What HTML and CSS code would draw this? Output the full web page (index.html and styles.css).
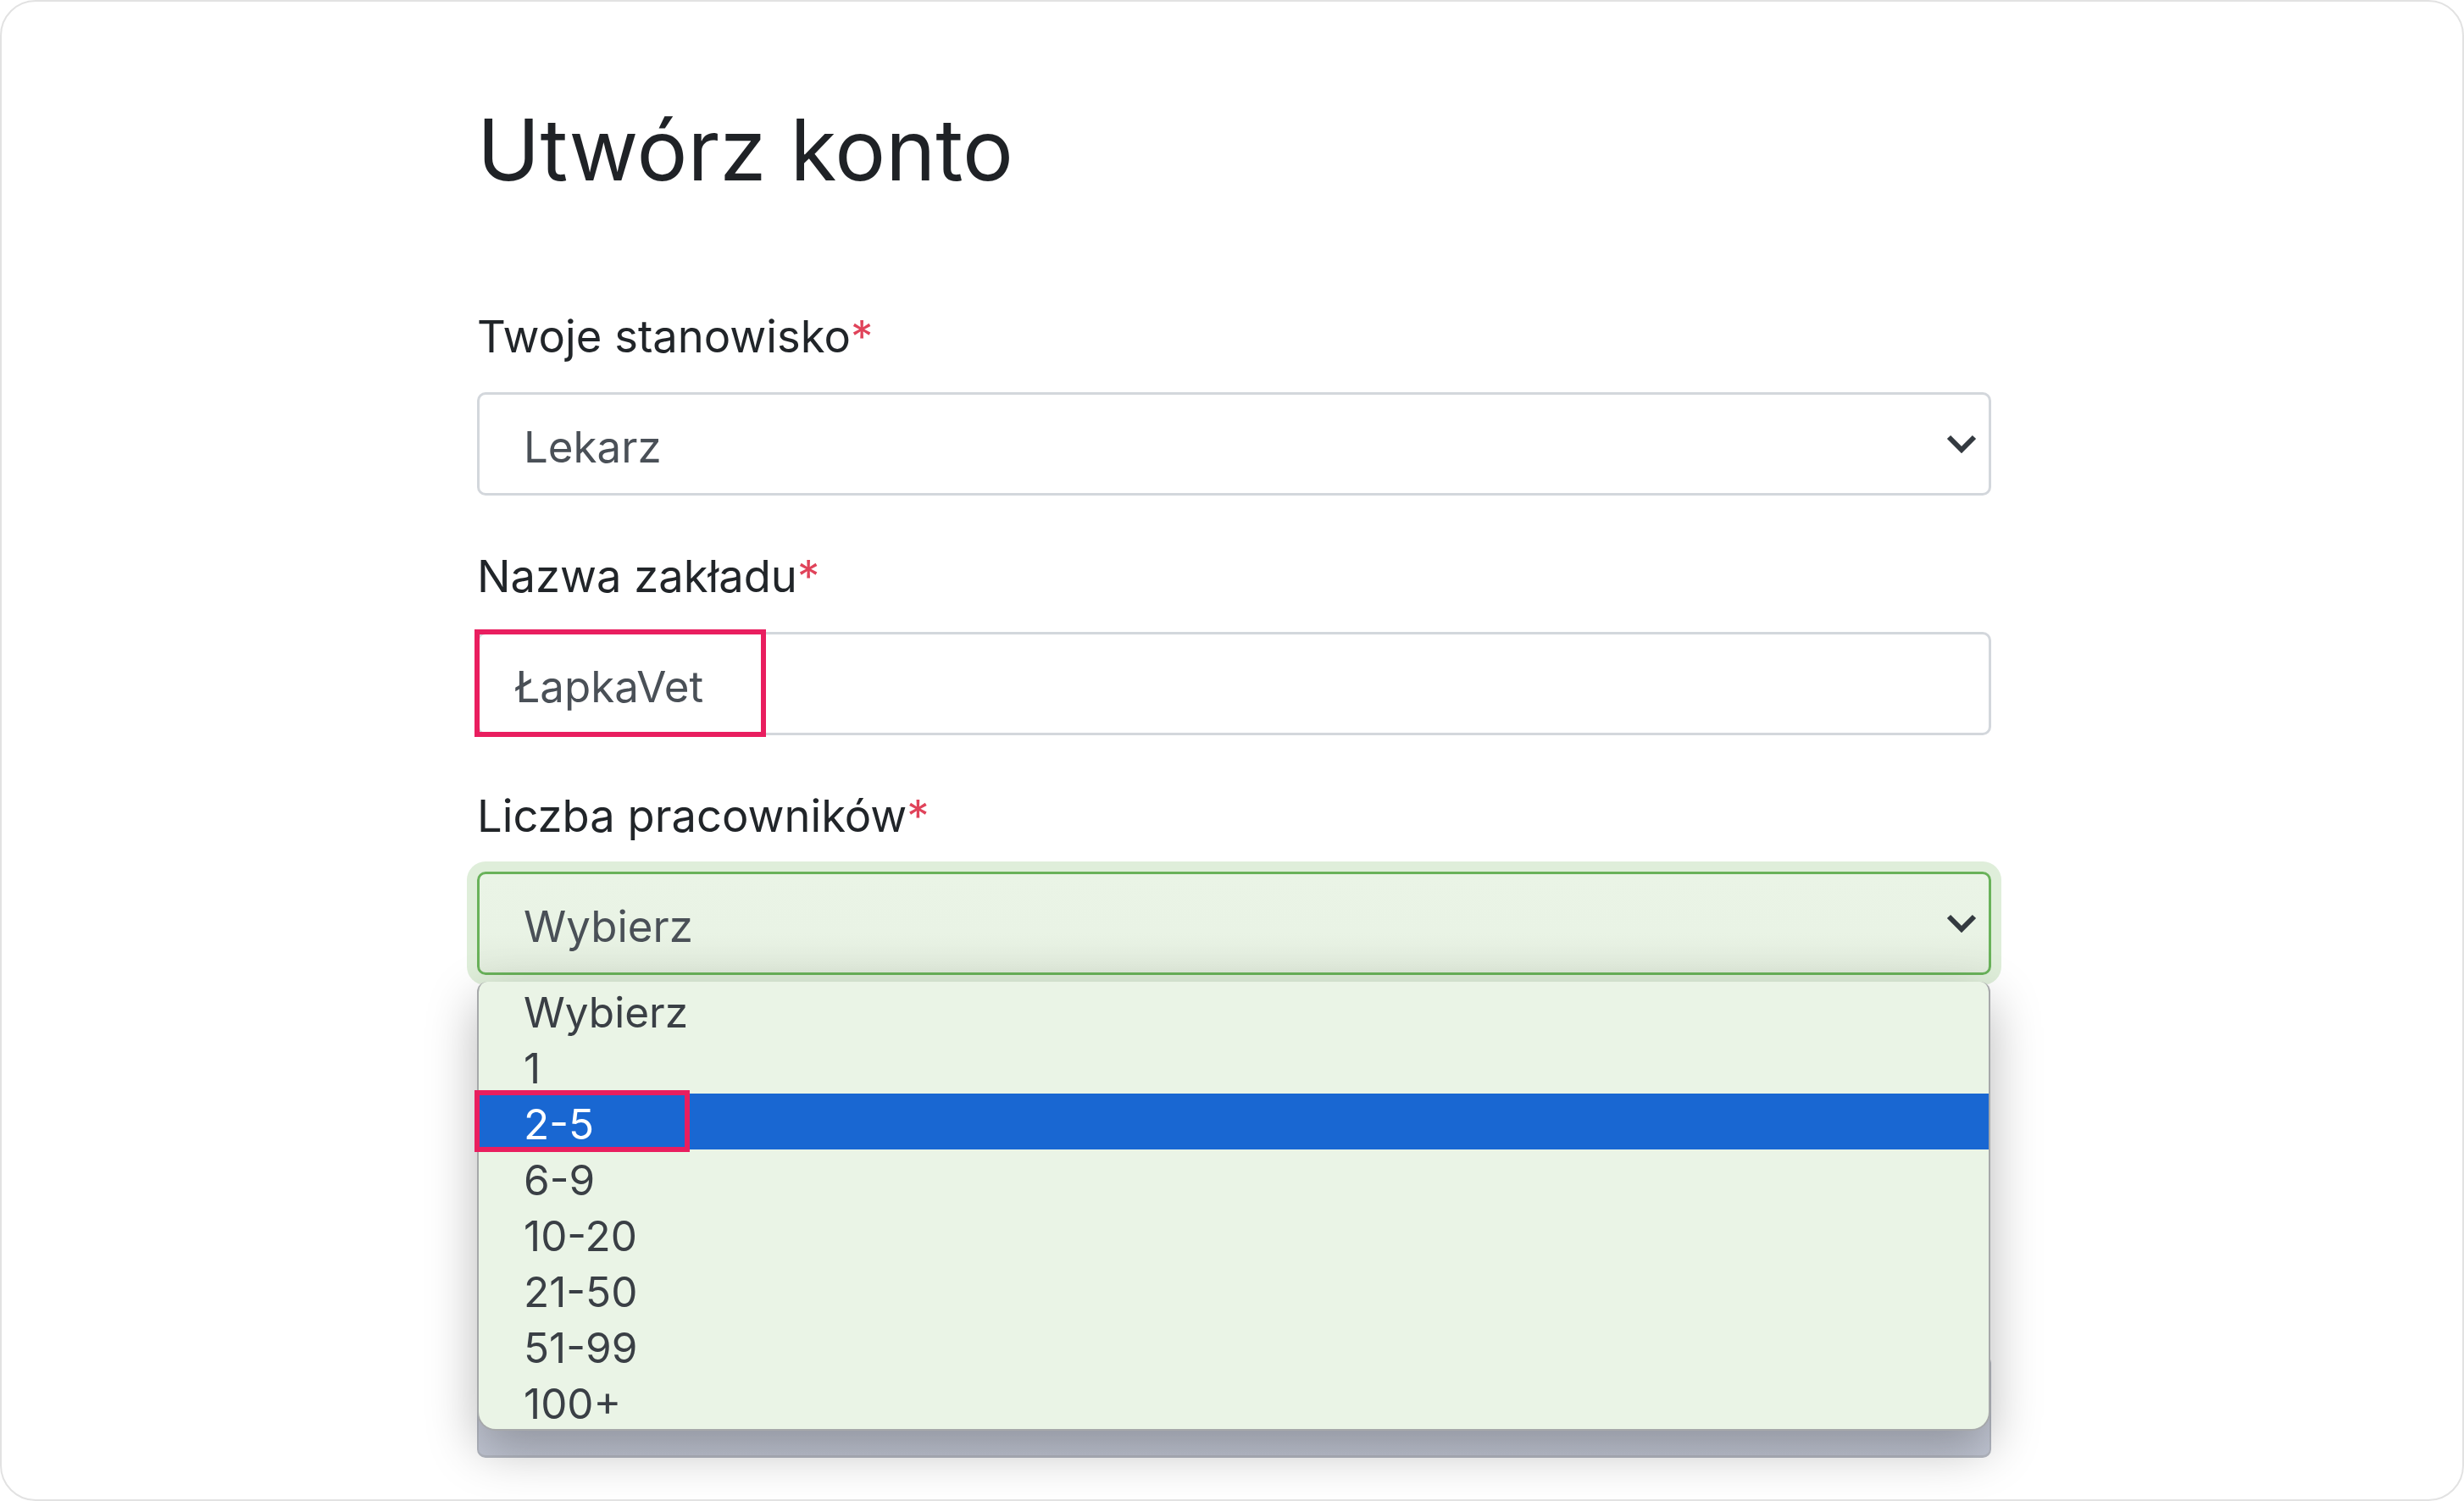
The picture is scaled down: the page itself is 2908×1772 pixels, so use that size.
FILE: index.html
```html
<!DOCTYPE html>
<html lang="pl">
<head>
<meta charset="utf-8">
<title>Utwórz konto</title>
<link rel="stylesheet" href="styles.css">
</head>
<body>
<div class="frame">
  <div class="form">
    <h1 class="title">Utwórz konto</h1>

    <div class="group">
      <div class="label">Twoje stanowisko<span class="req">*</span></div>
      <div class="field select">
        <span class="value">Lekarz</span>
        <svg class="chev" viewBox="0 0 36 22" width="36" height="22"><polyline points="3,3 18,18 33,3" fill="none" stroke="#343a40" stroke-width="6" stroke-linejoin="miter"/></svg>
      </div>
    </div>

    <div class="group">
      <div class="label">Nazwa zakładu<span class="req">*</span></div>
      <div class="field input">
        <span class="value">ŁapkaVet</span>
        <div class="mark mark-input"></div>
      </div>
    </div>

    <div class="group">
      <div class="label">Liczba pracowników<span class="req">*</span></div>
      <div class="select-wrap">
        <div class="field select focused">
          <span class="value">Wybierz</span>
          <svg class="chev" viewBox="0 0 36 22" width="36" height="22"><polyline points="3,3 18,18 33,3" fill="none" stroke="#343a40" stroke-width="6" stroke-linejoin="miter"/></svg>
        </div>
        <ul class="options">
          <li class="opt">Wybierz</li>
          <li class="opt">1</li>
          <li class="opt active">2-5<div class="mark mark-opt"></div></li>
          <li class="opt">6-9</li>
          <li class="opt">10-20</li>
          <li class="opt">21-50</li>
          <li class="opt">51-99</li>
          <li class="opt">100+</li>
        </ul>
      </div>
    </div>

    <div class="button">Zgadzam się z regulaminem i polityką prywatności</div>
  </div>
</div>
</body>
</html>
```
FILE: styles.css
```css
html, body {
  margin: 0;
  padding: 0;
  background: #ffffff;
}

.frame {
  width: 2908px;
  height: 1772px;
  box-sizing: border-box;
  border: 2px solid #e2e2e2;
  border-radius: 42px;
  background: #ffffff;
  overflow: hidden;
  padding-top: 115px;
  font-family: Inter, "Noto Sans", "Liberation Sans", sans-serif;
  color: #212529;
}

.form {
  width: 1787px;
  margin-left: 561px;
  position: relative;
}

.title {
  margin: 0 0 128px 0;
  font-size: 100px;
  font-weight: 400;
  line-height: 1.2;
  color: #1f2226;
}

.group {
  margin-bottom: 63px;
}

.label {
  font-size: 52.5px;
  line-height: 64px;
  margin-bottom: 34px;
  color: #212529;
}

.req {
  color: #e0435a;
}

.field {
  height: 122px;
  box-sizing: border-box;
  border: 3px solid #d3d7dc;
  border-radius: 10px;
  background: #ffffff;
  display: flex;
  align-items: center;
  position: relative;
  font-size: 51px;
  color: #4a5057;
}

.select {
  padding-left: 52px;
  padding-right: 14px;
  justify-content: space-between;
}

.input {
  padding-left: 41px;
}

.value {
  padding-top: 6px;
}

.chev {
  display: block;
}

.select-wrap {
  position: relative;
}

.focused {
  border-color: #69b25a;
  background: linear-gradient(#eaf4e6 0%, #e9f3e5 60%, #e1ebdc 100%);
  box-shadow: 0 0 0 12px #dfeeda;
}

.options {
  position: absolute;
  left: 0;
  right: 1px;
  top: calc(100% + 8px);
  margin: 0;
  padding: 0;
  list-style: none;
  background: #eaf4e6;
  border: 2px solid #a6a8aa;
  border-top: none;
  border-radius: 12px 12px 22px 22px;
  box-shadow: 0 22px 60px rgba(0, 0, 0, 0.28);
  z-index: 5;
}

.opt {
  height: 66px;
  line-height: 60px;
  padding-top: 6px;
  box-sizing: border-box;
  padding-left: 53px;
  font-size: 49.5px;
  color: #3a3f45;
  position: relative;
}

.opt.active {
  background: #1967d2;
  color: #ffffff;
}

.mark {
  position: absolute;
  border: 6px solid #e91e5f;
  box-sizing: border-box;
  z-index: 6;
}

.mark-input {
  left: -6px;
  top: -6px;
  width: 344px;
  height: 127px;
}

.mark-opt {
  left: -5px;
  top: -4px;
  width: 254px;
  height: 73px;
}

.button {
  height: 122px;
  margin-top: 448px;
  box-sizing: border-box;
  border-radius: 10px;
  border: 2px solid #b4b8c2;
  border-bottom-width: 3px;
  background: linear-gradient(#d0d4df, #c2c7d5);
  display: flex;
  align-items: center;
  padding-left: 53px;
  padding-bottom: 14px;
  font-size: 50px;
  color: #2a2d33;
}
```
